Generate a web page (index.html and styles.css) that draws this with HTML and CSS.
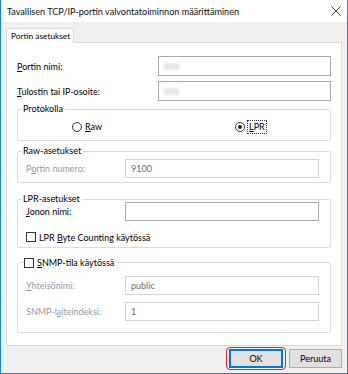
FILE: index.html
```html
<!DOCTYPE html>
<html lang="fi">
<head>
    <meta charset="UTF-8">
    <title>Tavallisen TCP/IP-portin valvontatoiminnon määrittäminen</title>
    <link rel="stylesheet" href="styles.css">
</head>
<body>
    <div class="window">
        <div class="titlebar">
            <span class="title">Tavallisen TCP/IP-portin valvontatoiminnon määrittäminen</span>
            <svg class="close" width="10" height="10" viewBox="0 0 10 10">
                <path d="M0.5 0.5 L9.5 9.5 M9.5 0.5 L0.5 9.5" stroke="#222" stroke-width="0.9"/>
            </svg>
        </div>
        <div class="client">
            <div class="tabs">
                <div class="tab">Portin asetukset</div>
            </div>
            <div class="panel">
                <div class="field-row">
                    <span><u>P</u>ortin nimi:</span>
                    <div class="input wide"><span class="blur"></span></div>
                </div>
                <div class="field-row">
                    <span><u>T</u>ulostin tai IP-osoite:</span>
                    <div class="input wide"><span class="blur"></span></div>
                </div>

                <div class="group protocol">
                    <div class="legend">Protokolla</div>
                    <div class="radios">
                        <div class="radio raw"><span class="dot"></span><span><u>R</u>aw</span></div>
                        <div class="radio lpr"><span class="dot checked"></span><span class="focus"><u>L</u>PR</span></div>
                    </div>
                </div>

                <div class="group raw-group">
                    <div class="legend">Raw-asetukset</div>
                    <div class="group-row disabled">
                        <span>P<u>o</u>rtin numero:</span>
                        <div class="input narrow off">9100</div>
                    </div>
                </div>

                <div class="group lpr-group">
                    <div class="legend">LPR-asetukset</div>
                    <div class="group-row">
                        <span><u>J</u>onon nimi:</span>
                        <div class="input narrow"></div>
                    </div>
                    <div class="check"><span class="box"></span><span>LPR <u>B</u>yte Counting käytössä</span></div>
                </div>

                <div class="group snmp-group">
                    <div class="legend check"><span class="box"></span><span><u>S</u>NMP-tila käytössä</span></div>
                    <div class="group-row disabled">
                        <span><u>Y</u>hteisönimi:</span>
                        <div class="input narrow off">public</div>
                    </div>
                    <div class="group-row disabled">
                        <span>SNMP-l<u>a</u>iteindeksi:</span>
                        <div class="input narrow off">1</div>
                    </div>
                </div>
            </div>
            <div class="buttons">
                <div class="btn-ring"><button class="btn default">OK</button></div>
                <button class="btn">Peruuta</button>
            </div>
        </div>
    </div>
</body>
</html>
```

FILE: styles.css
```css
* {
    box-sizing: border-box;
}
body {
    margin: 0;
    font-family: Lato, "Noto Sans", sans-serif;
    font-size: 9px;
    color: #000;
    background: #fff;
}
u {
    text-decoration: underline;
    text-underline-offset: 1px;
}
.window {
    width: 348px;
    height: 374px;
    border: 1px solid #1883d7;
    border-top: none;
    display: flex;
    flex-direction: column;
    background: #f0f0f0;
}
.titlebar {
    height: 22px;
    background: #fff;
    display: flex;
    align-items: center;
    justify-content: space-between;
    padding: 0 6px 0 6px;
}
.title {
    font-size: 9.1px;
    color: #111;
}
.client {
    flex: 1;
    display: flex;
    flex-direction: column;
    padding: 6px 5px 0 5px;
}
.tabs {
    display: flex;
    height: 15px;
}
.tab {
    background: #fff;
    border: 1px solid #d9d9d9;
    border-bottom: none;
    padding: 0 3px 0 4px;
    line-height: 14px;
    font-size: 8.3px;
    white-space: nowrap;
    height: 15px;
    position: relative;
    z-index: 1;
}
.panel {
    background: #fff;
    border: 1px solid #d9d9d9;
    margin-top: -1px;
    height: 304px;
    padding: 13px 10px 0 10px;
    display: flex;
    flex-direction: column;
}
.field-row {
    display: flex;
    align-items: center;
    justify-content: space-between;
    height: 20px;
}
.field-row + .field-row {
    margin-top: 5px;
}
.input {
    height: 20px;
    border: 1px solid #a9a9a9;
    background: #fff;
    display: flex;
    align-items: center;
    padding-left: 5px;
}
.input.wide {
    width: 173px;
}
.input.narrow {
    width: 194px;
    height: 19px;
}
.input.off {
    border-color: #d4d4d4;
    color: #6d6d6d;
}
.blur {
    width: 15px;
    height: 7px;
    background: #e6e6e6;
    filter: blur(1px);
}
.group {
    border: 1px solid #dcdcdc;
    border-radius: 2px;
    padding: 0 11px 0 8px;
}
.legend {
    width: fit-content;
    background: #fff;
    margin: -7px 0 0 -4px;
    padding: 0 2px 0 1px;
    line-height: 12px;
}
.protocol {
    margin-top: 8px;
    padding-bottom: 7px;
}
.radios {
    display: flex;
    margin-top: 5px;
    height: 13px;
}
.radio {
    display: flex;
    align-items: center;
    gap: 3px;
}
.radio.raw {
    margin-left: 46px;
}
.radio.lpr {
    margin-left: 133px;
}
.dot {
    width: 10px;
    height: 10px;
    border: 1px solid #333;
    border-radius: 50%;
    display: flex;
    align-items: center;
    justify-content: center;
    background: #fff;
}
.dot.checked::after {
    content: "";
    width: 4px;
    height: 4px;
    border-radius: 50%;
    background: #222;
}
.focus {
    outline: 1px dotted #333;
    padding: 0 1px;
    line-height: 12px;
}
.group-row {
    display: flex;
    align-items: center;
    justify-content: space-between;
}
.disabled span {
    color: #9a9a9a;
}
.raw-group {
    margin-top: 10px;
    padding-bottom: 4px;
}
.raw-group .group-row {
    margin-top: 2px;
}
.lpr-group {
    margin-top: 16px;
    padding-bottom: 4px;
}
.lpr-group .group-row {
    margin-top: -3px;
}
.check {
    display: flex;
    align-items: center;
    gap: 3px;
}
.lpr-group .check {
    margin-top: 10px;
    height: 12px;
}
.box {
    width: 10px;
    height: 10px;
    border: 1px solid #333;
    background: #fff;
}
.snmp-group {
    margin-top: 14px;
    padding-bottom: 11px;
}
.snmp-group .legend {
    margin-left: -2px;
    padding: 0 3px 0 0;
    height: 13px;
}
.snmp-group .group-row {
    margin-top: 7px;
}
.buttons {
    display: flex;
    justify-content: flex-end;
    align-items: center;
    gap: 3px;
    padding-top: 1px;
}
.btn-ring {
    border: 1px solid #e3262b;
    border-radius: 4px;
    padding: 1px 2px;
}
.btn {
    font-family: inherit;
    font-size: 9px;
    height: 19px;
    width: 53px;
    border: 1px solid #adadad;
    background: #e1e1e1;
    color: #000;
    padding: 0;
    margin: 0;
}
.btn.default {
    border: 1px solid #0078d7;
    box-shadow: inset 0 0 0 1px #0078d7;
    width: 54px;
}
```
